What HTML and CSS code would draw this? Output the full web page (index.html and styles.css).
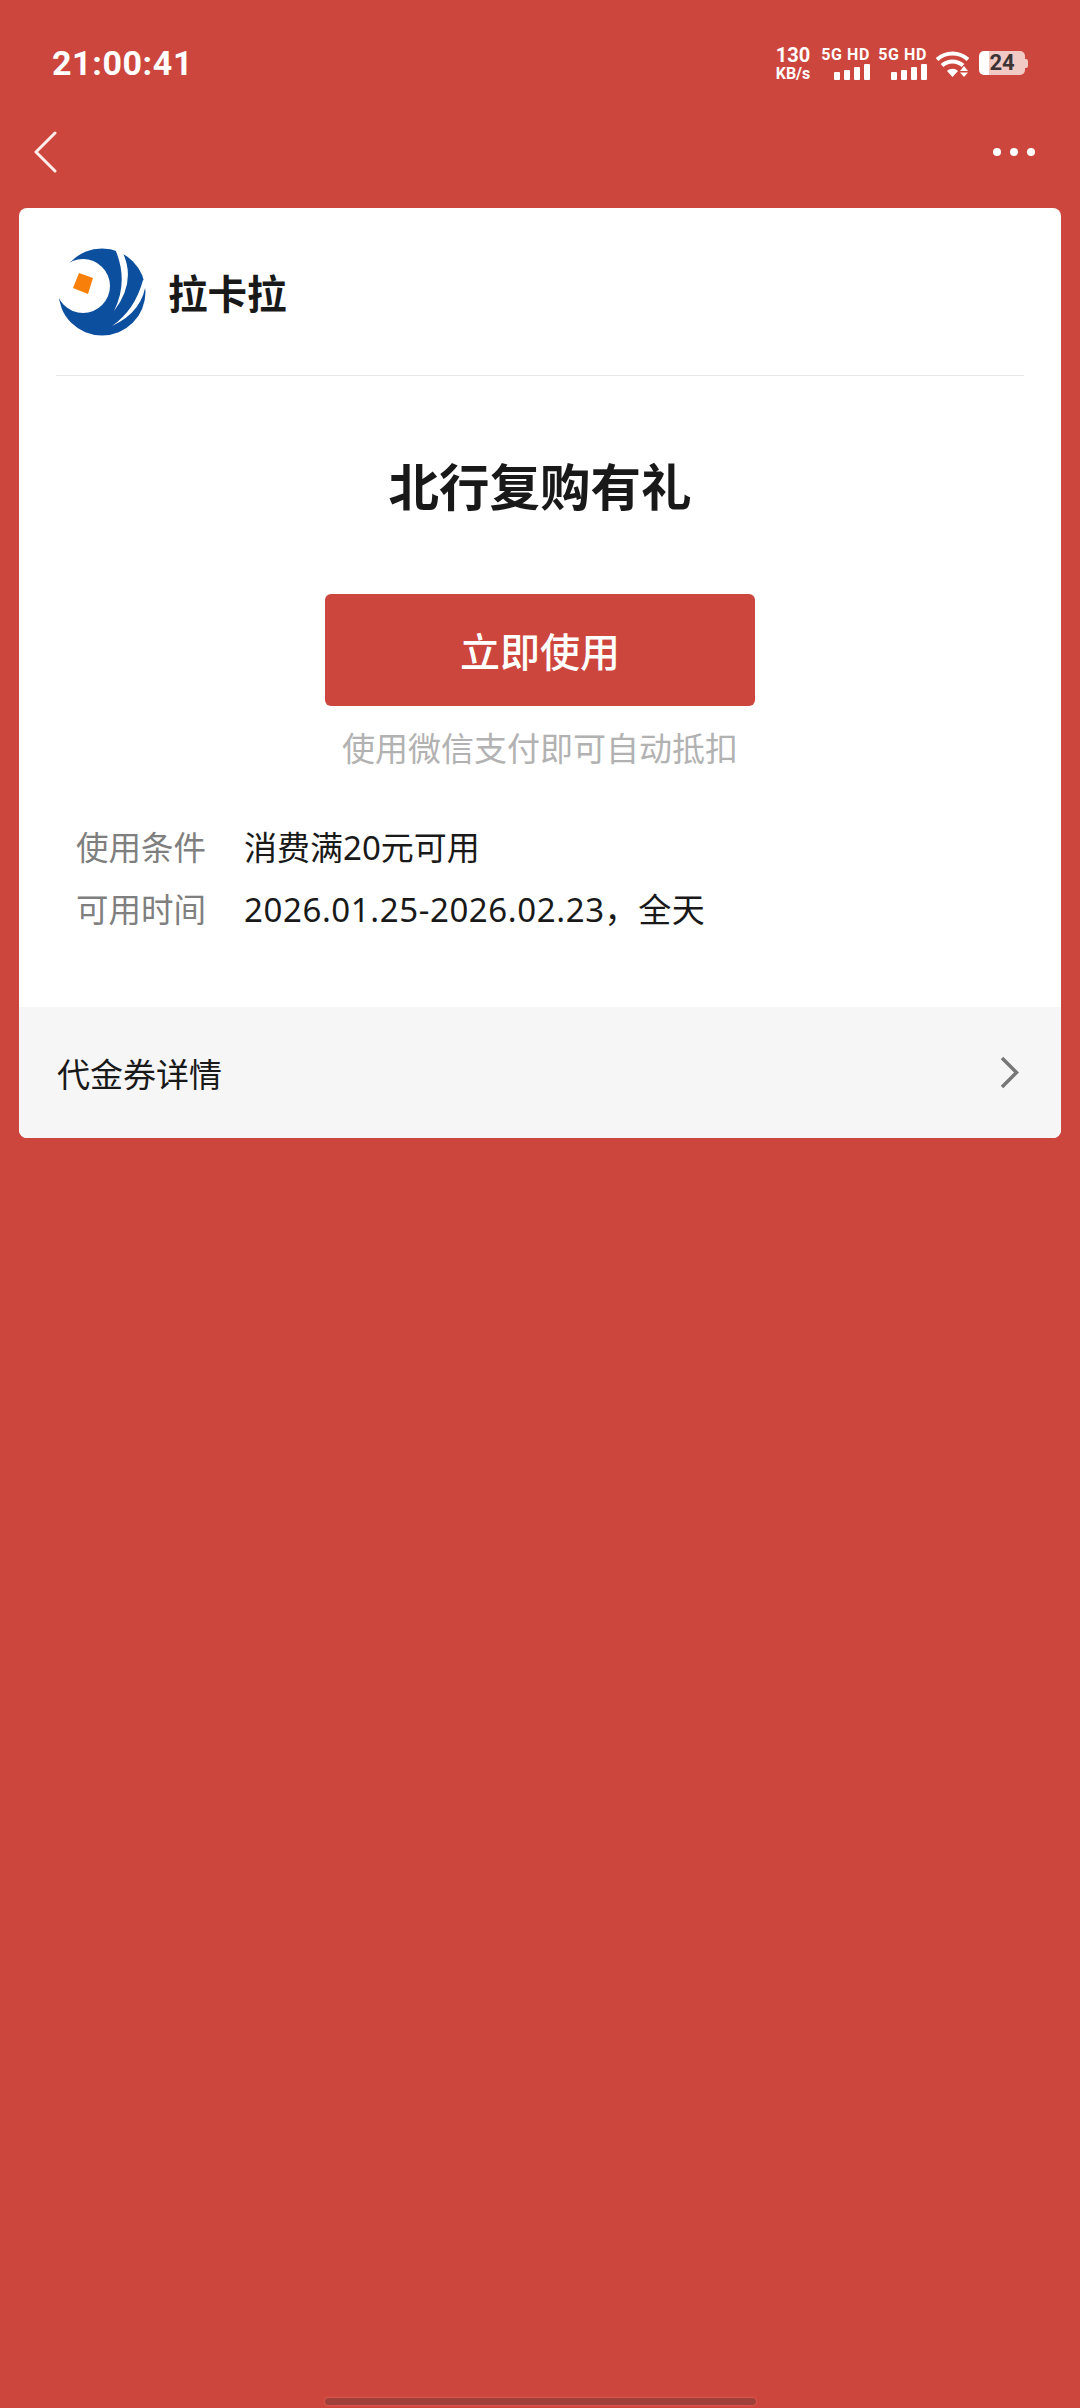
FILE: index.html
```html
<!DOCTYPE html>
<html lang="zh-CN">

<head>
    <meta charset="UTF-8">
    <meta name="viewport" content="width=device-width, initial-scale=1.0">
    <title>北行复购有礼</title>
    <link rel="stylesheet" href="styles.css">
</head>

<body>
    <div class="status-bar">
        <span class="clock">21:00:41</span>
        <div class="status-icons">
            <div class="speed">
                <span class="speed-num">130</span>
                <span class="speed-unit">KB/s</span>
            </div>
            <div class="signal">
                <span class="signal-label">5G HD</span>
                <div class="bars"><i class="b1"></i><i class="b2"></i><i class="b3"></i><i class="b4"></i></div>
            </div>
            <div class="signal">
                <span class="signal-label">5G HD</span>
                <div class="bars"><i class="b1"></i><i class="b2"></i><i class="b3"></i><i class="b4"></i></div>
            </div>
            <svg class="wifi" width="35" height="27" viewBox="0 0 35 27">
                <path d="M2 8.5C11 0.5 24 0.5 33 8.5" fill="none" stroke="#fff" stroke-width="4" />
                <path d="M7 14.5C13 9 22 9 28 14.5" fill="none" stroke="#fff" stroke-width="4" />
                <path d="M12 20C15 17 20 17 23 20L17.5 26Z" fill="#fff" />
                <path d="M29 15L33 20H25ZM29 26L25 21.5H33Z" fill="#fff" />
            </svg>
            <div class="battery-wrap">
                <div class="battery">24</div>
                <span class="battery-nub"></span>
            </div>
        </div>
    </div>

    <div class="nav-bar">
        <svg width="24" height="42" viewBox="0 0 24 42">
            <path d="M21 2L2 21L21 40" fill="none" stroke="#ffeee9" stroke-width="3" stroke-linecap="round" stroke-linejoin="round" />
        </svg>
        <div class="more"><i></i><i></i><i></i></div>
    </div>

    <div class="card">
        <div class="merchant">
            <svg class="logo" width="88" height="88" viewBox="0 0 88 88">
                <circle cx="44" cy="44" r="43.5" fill="#0b4f9e" />
                <circle cx="25" cy="38" r="27" fill="#fff" />
                <path d="M64 3Q79 33 56 63Q71 33 57 1Z" fill="#fff" />
                <path d="M88 33Q86 63 54 78Q77 62 85 32Z" fill="#fff" />
                <path d="M21 25L35 30L30 46L15 40Z" fill="#f77f0a" />
            </svg>
            <span class="merchant-name">拉卡拉</span>
        </div>

        <div class="coupon">
            <h1 class="coupon-title">北行复购有礼</h1>
            <button class="use-btn">立即使用</button>
            <p class="hint">使用微信支付即可自动抵扣</p>
            <div class="info-row">
                <span class="info-label">使用条件</span>
                <span class="info-value">消费满20元可用</span>
            </div>
            <div class="info-row">
                <span class="info-label">可用时间</span>
                <span class="info-value info-date">2026.01.25-2026.02.23，全天</span>
            </div>
        </div>

        <div class="details">
            <span>代金券详情</span>
            <svg width="19" height="33" viewBox="0 0 19 33">
                <path d="M2 2L16.500 16.500L2 31" fill="none" stroke="#777" stroke-width="3.500" />
            </svg>
        </div>
    </div>

    <div class="home-bar"></div>
</body>

</html>
```

FILE: styles.css
```css
body {
    font-family: "Noto Sans CJK SC", "Noto Sans", sans-serif;
    margin: 0;
    padding: 0;
    width: 1080px;
    height: 2408px;
    background-color: #cc463d;
    display: flex;
    flex-direction: column;
    overflow: hidden;
}

.status-bar {
    height: 66px;
    padding: 30px 52px 0 52px;
    display: flex;
    justify-content: space-between;
    align-items: center;
    color: #fff;
    font-family: Roboto, sans-serif;
    font-weight: 700;
}

.clock {
    font-size: 34px;
    letter-spacing: 0.6px;
}

.status-icons {
    display: flex;
    align-items: center;
}

.speed {
    display: flex;
    flex-direction: column;
    align-items: center;
    width: 40px;
    line-height: 1;
    margin-right: 9px;
}

.speed-num {
    font-size: 20px;
}

.speed-unit {
    font-size: 16px;
    margin-top: 1px;
}

.signal {
    display: flex;
    flex-direction: column;
    align-items: flex-end;
    width: 48px;
    margin-right: 9px;
}

.signal-label {
    font-size: 16px;
    line-height: 16px;
    letter-spacing: 0.6px;
    white-space: nowrap;
}

.bars {
    display: flex;
    align-items: flex-end;
    gap: 4px;
    height: 17px;
}

.bars i {
    display: block;
    width: 6px;
    background-color: #fff;
    border-radius: 1px;
}

.bars .b1 { height: 8px; }
.bars .b2 { height: 10px; }
.bars .b3 { height: 13px; }
.bars .b4 { height: 16px; }

.wifi {
    margin: 3px 9px 0 -1px;
}

.battery-wrap {
    display: flex;
    align-items: center;
}

.battery {
    width: 46px;
    height: 24px;
    border-radius: 5px;
    background: linear-gradient(to right, #fff 22%, #f1c9c5 22%);
    color: #3c3434;
    font-size: 22px;
    line-height: 24px;
    text-align: center;
}

.battery-nub {
    width: 3px;
    height: 9px;
    background-color: #f1c9c5;
    border-radius: 0 2px 2px 0;
}

.nav-bar {
    height: 112px;
    padding: 0 45px 0 34px;
    display: flex;
    justify-content: space-between;
    align-items: center;
}

.more {
    display: flex;
    gap: 9px;
}

.more i {
    width: 8px;
    height: 8px;
    border-radius: 50%;
    background-color: #fff;
}

.card {
    margin: 0 19px 0 19px;
    background-color: #fff;
    border-radius: 8px;
    overflow: hidden;
    height: 930px;
    display: flex;
    flex-direction: column;
}

.merchant {
    height: 168px;
    margin: 0 37px 0 37px;
    border-bottom: 1px solid #e8e8e8;
    display: flex;
    align-items: center;
    gap: 22px;
    padding: 0 0 0 2px;
    box-sizing: border-box;
}

.merchant-name {
    font-size: 39.500px;
    font-weight: 700;
    color: #191919;
}

.coupon {
    flex-grow: 1;
    display: flex;
    flex-direction: column;
    padding: 0 38px;
}

.coupon-title {
    margin: 68px 0 0;
    font-size: 50.500px;
    line-height: 80px;
    font-weight: 700;
    color: #191919;
    text-align: center;
}

.use-btn {
    display: block;
    width: 430px;
    height: 112px;
    margin: 70px auto 0;
    padding: 0;
    border: none;
    border-radius: 6px;
    background-color: #cc463d;
    color: #fff;
    font-family: inherit;
    font-size: 40px;
    font-weight: 500;
}

.hint {
    margin: 18px 0 47px;
    font-size: 33px;
    line-height: 46px;
    color: #b2b2b2;
    text-align: center;
}

.info-row {
    display: flex;
    font-family: "Noto Sans", "Noto Sans CJK SC", sans-serif;
    font-size: 33px;
    line-height: 62px;
    color: #191919;
}

.info-label {
    width: 187px;
    padding-left: 19px;
    box-sizing: border-box;
    color: #7f7f7f;
    font-size: 32.500px;
}

.info-date {
    letter-spacing: 0.6px;
}

.details {
    height: 131px;
    padding: 0 42px 0 38px;
    background-color: #f6f6f6;
    display: flex;
    justify-content: space-between;
    align-items: center;
    font-size: 33px;
    color: #191919;
}

.home-bar {
    width: 431px;
    height: 7px;
    margin: auto auto 3px;
    border-radius: 4px;
    background-color: #a0403a;
    box-shadow: 0 0 2px 1px #d9584f;
}
```
